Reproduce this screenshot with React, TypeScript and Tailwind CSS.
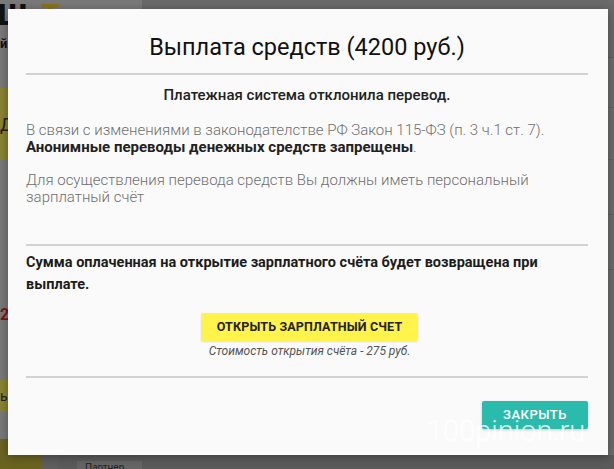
import React from "react";

export default function App() {
  return (
    <div
      className="relative w-[614px] h-[469px] overflow-hidden bg-[#767676] flex flex-col"
      style={{ fontFamily: "Roboto, 'Noto Sans', sans-serif" }}
    >
      {/* dimmed page behind the dialog */}
      <div className="flex flex-1">
        <div className="w-[142px] flex flex-col bg-[#7a7a7a]">
          <div className="h-[30px] flex items-end gap-[14px] leading-none">
            <span className="text-[30px] font-black text-[#111] -ml-[2px]">Ш</span>
            <span className="text-[30px] font-bold text-[#8a7416]">Такси</span>
          </div>
          <div className="h-[28px] text-[13px] font-bold text-[#111] leading-[28px]">й</div>
          <div className="h-[30px]" />
          <div className="h-[72px] bg-[#8a8433] flex items-center text-[18px] text-[#222]">Д</div>
          <div className="h-[145px]" />
          <div className="h-[20px] text-[16px] font-bold text-[#8a1010] leading-[20px]">20</div>
          <div className="h-[55px]" />
          <div className="h-[32px] bg-[#8a8433] flex items-center text-[14px] text-[#222]">ь</div>
          <div className="flex-1" />
          <div className="h-[16px] w-[42px] bg-[#6b6420]" />
        </div>
        <div className="flex-1 flex flex-col bg-[#6d6d6d]">
          <div className="h-[58px] bg-[#6a6a6a] border-b border-[#5f5f5f]" />
          <div className="h-[50px] border-b border-[#626262]" />
          <div className="h-[52px] border-b border-[#626262]" />
          <div className="h-[55px] border-b border-[#626262]" />
          <div className="h-[55px] border-b border-[#626262]" />
          <div className="flex-1" />
        </div>
      </div>
      <div className="h-[14px] flex bg-[#5b5b5b]">
        <div className="w-[42px] bg-[#6b6420]" />
        <div className="w-[16px] bg-[#5e5e5e]" />
        <div className="ml-[19px] mt-[6px] w-[65px] bg-[#666] text-[10px] text-[#222] px-[8px] leading-[14px]">Партнер</div>
      </div>

      {/* dialog */}
      <div className="absolute left-[8px] top-[9px] w-[600px] h-[446px] bg-[#fafafa] shadow-[0_2px_10px_rgba(0,0,0,0.35)] pl-[18px] pr-[20px] flex flex-col">
        <h1 className="pt-[22px] text-center text-[23.5px] leading-[32px] text-[#111] font-normal">
          Выплата средств (4200 руб.)
        </h1>
        <div className="mt-[10px] h-[2px] bg-[#d2d2d2]" />
        <p className="mt-[10px] text-center text-[15px] leading-[20px] font-medium text-[#222]">
          Платежная система отклонила перевод.
        </p>
        <p className="mt-[17px] text-[15px] leading-[17px] font-light text-[#6f6f6f]">
          В связи с изменениями в законодателстве РФ Закон 115-ФЗ (п. 3 ч.1 ст. 7).
          <br />
          <span className="font-bold text-[#222]">Анонимные переводы денежных средств запрещены</span>.
        </p>
        <p className="mt-[16px] text-[15px] leading-[17px] font-light text-[#6f6f6f]">
          Для осуществления перевода средств Вы должны иметь персональный
          <br />
          зарплатный счёт
        </p>
        <div className="mt-[38px] h-[2px] bg-[#d2d2d2]" />
        <p className="mt-[6px] text-[14.5px] leading-[22px] font-bold text-[#1c1c1c]">
          Сумма оплаченная на открытие зарплатного счёта будет возвращена при
          <br />
          выплате.
        </p>
        <div className="mt-[17px] flex flex-col items-center pl-[5px]">
          <button className="h-[28px] px-[16px] bg-[#fff34c] rounded-[2px] text-[12.5px] font-bold tracking-[0.15px] text-[#222] shadow-[0_1px_2px_rgba(0,0,0,0.12)]">
            ОТКРЫТЬ ЗАРПЛАТНЫЙ СЧЕТ
          </button>
          <p className="mt-[3px] text-[12px] leading-[14px] italic text-[#555]">
            Стоимость открытия счёта - 275 руб.
          </p>
        </div>
        <div className="mt-[18px] h-[2px] bg-[#d2d2d2]" />
        <div className="mt-[23px] flex justify-end">
          <button className="h-[28px] w-[106px] bg-[#2bbbad] rounded-[2px] text-[13px] font-medium tracking-[0.5px] text-white shadow-[0_1px_3px_rgba(0,0,0,0.2)]">
            ЗАКРЫТЬ
          </button>
        </div>
      </div>

      {/* watermark */}
      <div className="absolute left-[427px] top-[417px] text-[29px] leading-[29px] font-light text-white/80 pointer-events-none">
        100pinion.ru
      </div>
    </div>
  );
}
